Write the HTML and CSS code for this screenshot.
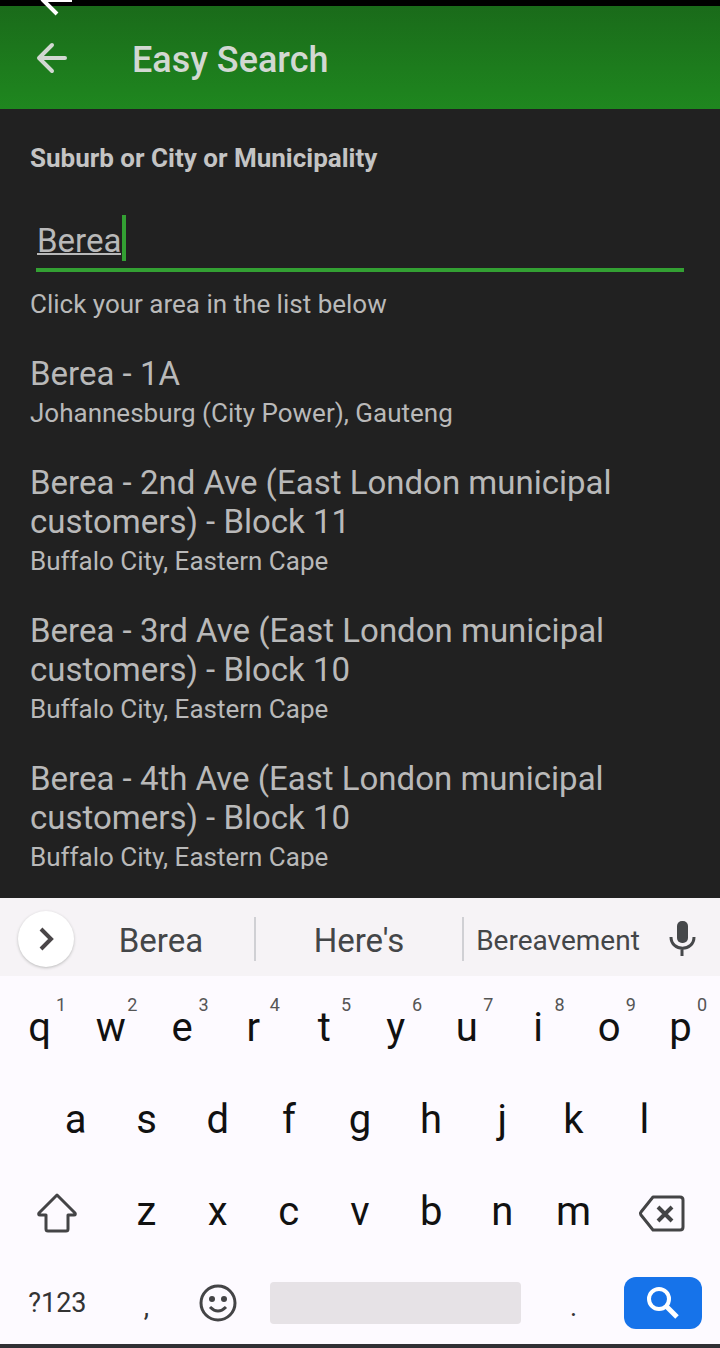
FILE: index.html
```html
<!DOCTYPE html>
<html lang="en">
<head>
    <meta charset="UTF-8">
    <meta name="viewport" content="width=device-width, initial-scale=1.0">
    <title>Easy Search</title>
    <link rel="stylesheet" href="styles.css">
</head>
<body>
    <div class="statusBar">
        <button class="outerBack" aria-label="Close">
            <svg width="34" height="16" viewBox="0 0 34 16"><path d="M34 0H5M4 -1L19 14" fill="none" stroke="#fff" stroke-width="4"/></svg>
        </button>
    </div>

    <header class="appBar">
        <button class="back" aria-label="Back">
            <svg width="32" height="32" viewBox="0 0 32 32"><path d="M29 16H4M16 3L3 16L16 29" fill="none" stroke="#d2d8d2" stroke-width="4" stroke-linejoin="round" stroke-linecap="round"/></svg>
        </button>
        <h1>Easy Search</h1>
    </header>

    <main>
        <label class="fieldLabel" for="areaInput">Suburb or City or Municipality</label>
        <div class="field">
            <input type="text" id="areaInput" value="Berea" size="4" autocomplete="off">
        </div>
        <p class="hint">Click your area in the list below</p>

        <ul class="areaList">
            <li><a href="#">
                <span class="area">Berea - 1A</span>
                <span class="region">Johannesburg (City Power), Gauteng</span>
            </a></li>
            <li><a href="#">
                <span class="area">Berea - 2nd Ave (East London municipal customers) - Block 11</span>
                <span class="region">Buffalo City, Eastern Cape</span>
            </a></li>
            <li><a href="#">
                <span class="area">Berea - 3rd Ave (East London municipal customers) - Block 10</span>
                <span class="region">Buffalo City, Eastern Cape</span>
            </a></li>
            <li><a href="#">
                <span class="area">Berea - 4th Ave (East London municipal customers) - Block 10</span>
                <span class="region">Buffalo City, Eastern Cape</span>
            </a></li>
        </ul>
    </main>

    <section class="keyboard" aria-label="Keyboard">
        <div class="suggestions">
            <button class="expand" aria-label="More tools">
                <svg width="56" height="56" viewBox="0 0 56 56"><path d="M23 18L33 28L23 38" fill="none" stroke="#4a4648" stroke-width="4"/></svg>
            </button>
            <button class="word">Berea</button>
            <button class="word center">Here's</button>
            <button class="word long">Bereavement</button>
            <button class="mic" aria-label="Voice input">
                <svg width="28" height="36" viewBox="0 0 28 36"><rect x="9" y="0" width="11" height="22" rx="5" fill="#46484a"/><path d="M3 16C3 31 26 31 26 16M14 27V35" fill="none" stroke="#46484a" stroke-width="3"/></svg>
            </button>
        </div>

        <div class="keys">
            <div class="row">
                <button class="key">q<sup>1</sup></button>
                <button class="key">w<sup>2</sup></button>
                <button class="key">e<sup>3</sup></button>
                <button class="key">r<sup>4</sup></button>
                <button class="key">t<sup>5</sup></button>
                <button class="key">y<sup>6</sup></button>
                <button class="key">u<sup>7</sup></button>
                <button class="key">i<sup>8</sup></button>
                <button class="key">o<sup>9</sup></button>
                <button class="key">p<sup>0</sup></button>
            </div>
            <div class="row middle">
                <button class="key">a</button>
                <button class="key">s</button>
                <button class="key">d</button>
                <button class="key">f</button>
                <button class="key">g</button>
                <button class="key">h</button>
                <button class="key">j</button>
                <button class="key">k</button>
                <button class="key">l</button>
            </div>
            <div class="row">
                <button class="key wide" aria-label="Shift">
                    <svg width="42" height="42" viewBox="0 0 42 42"><path d="M21 3L39 21Q40 23 38 23H32V37Q32 39 30 39H12Q10 39 10 37V23H4Q2 23 3 21Z" fill="none" stroke="#444446" stroke-width="3" stroke-linejoin="round"/></svg>
                </button>
                <button class="key">z</button>
                <button class="key">x</button>
                <button class="key">c</button>
                <button class="key">v</button>
                <button class="key">b</button>
                <button class="key">n</button>
                <button class="key">m</button>
                <button class="key wide" aria-label="Delete">
                    <svg width="48" height="40" viewBox="0 0 48 40"><path d="M14 4H41Q44 4 44 7V34Q44 37 41 37H14L2 22Q1 20 2 19Z" fill="none" stroke="#444446" stroke-width="3" stroke-linejoin="round"/><path d="M19 14L33 28M33 14L19 28" stroke="#444446" stroke-width="4"/></svg>
                </button>
            </div>
            <div class="row bottom">
                <button class="key small">?123</button>
                <button class="key small punct">,</button>
                <button class="key" aria-label="Emoji">
                    <svg width="38" height="38" viewBox="0 0 38 38"><circle cx="19" cy="19" r="17" fill="none" stroke="#444446" stroke-width="3"/><circle cx="13" cy="15" r="3" fill="#444446"/><circle cx="25" cy="15" r="3" fill="#444446"/><path d="M11 23Q19 31 27 23" fill="none" stroke="#444446" stroke-width="3"/></svg>
                </button>
                <button class="space" aria-label="Space"></button>
                <button class="key small punct">.</button>
                <button class="key" aria-label="Search">
                    <span class="go"><svg width="34" height="34" viewBox="0 0 34 34"><circle cx="13" cy="13" r="10" fill="none" stroke="#fff" stroke-width="4"/><path d="M20 20L31 31" stroke="#fff" stroke-width="5"/></svg></span>
                </button>
            </div>
        </div>
    </section>
</body>
</html>
```

FILE: styles.css
```css
* {
    box-sizing: border-box;
}

body {
    margin: 0;
    min-height: 100vh;
    display: flex;
    flex-direction: column;
    background-color: #212121;
    color: #b9b9b9;
    font-family: Roboto, "Liberation Sans", sans-serif;
}

button {
    background: none;
    border: none;
    padding: 0;
    font-family: inherit;
    cursor: pointer;
}

svg {
    display: block;
}

.statusBar {
    position: relative;
    height: 6px;
    background-color: #000;
}

.outerBack {
    position: absolute;
    top: 0;
    left: 38px;
}

.appBar {
    display: flex;
    align-items: center;
    gap: 64px;
    height: 103px;
    padding: 0 36px;
    background: linear-gradient(#1a6b1a, #1f871f);
}

.appBar h1 {
    margin: 0;
    padding-top: 4px;
    font-size: 36px;
    font-weight: 500;
    line-height: 44px;
    color: #d2d8d2;
}

main {
    flex: 1;
    padding: 29px 30px;
}

.fieldLabel {
    display: block;
    font-size: 26px;
    font-weight: bold;
    line-height: 40px;
    color: #c4c4c4;
}

.field {
    display: flex;
    margin: 37px 6px 0;
    padding-bottom: 7px;
    border-bottom: 4px solid #33a033;
}

.field input {
    field-sizing: content;
    height: 46px;
    padding: 4px 1px 0;
    border: none;
    border-right: 4px solid #33a033; /* text cursor */
    outline: none;
    background: none;
    color: #b9b9b9;
    font-family: inherit;
    font-size: 33px;
    text-decoration: underline 2px;
}

.hint {
    margin: 12px 0 30px;
    font-size: 26px;
    line-height: 40px;
}

.areaList {
    display: flex;
    flex-direction: column;
    gap: 30px;
    margin: 0;
    padding: 0;
    list-style-type: none;
    overflow: hidden;
}

.areaList li:last-child {
    margin-bottom: -8px;
}

.areaList a {
    color: inherit;
    text-decoration: none;
}

.area {
    display: block;
    font-size: 33px;
    line-height: 39px;
}

.region {
    display: block;
    font-size: 26px;
    line-height: 40px;
}

.keyboard {
    background-color: #fdfaff;
    border-bottom: 4px solid #303034;
}

.suggestions {
    display: flex;
    align-items: center;
    height: 78px;
    padding: 4px 24px 0 18px;
    background-color: #f6f3f6;
}

.expand {
    margin-right: -6px;
    border-radius: 50%;
    background-color: #fff;
    box-shadow: 0 1px 3px #bbb;
}

.word {
    width: 188px;
    height: 44px;
    padding-top: 2px;
    border-right: 2px solid #d0d0d4;
    font-size: 33px;
    color: #444648;
}

.word.center {
    flex: 1;
}

.word.long {
    border: none;
    font-size: 28px;
}

.mic {
    margin-left: 16px;
}

.keys {
    padding: 0 4px;
}

.row {
    display: flex;
    align-items: center;
    height: 92px;
    padding-top: 10px;
}

.row.middle {
    padding-left: 36px;
    padding-right: 36px;
}

.row.bottom {
    display: grid;
    grid-template-columns: 3fr 2fr 2fr 8fr 2fr 3fr;
}

.key {
    position: relative;
    display: flex;
    flex: 2;
    align-items: center;
    justify-content: center;
    height: 80px;
    font-size: 40px;
    color: #111;
}

.key.wide {
    flex: 3;
    padding-top: 4px;
}

.key.small {
    font-size: 27px;
    color: #333;
}

.key.punct {
    padding-top: 8px;
}

.key sup {
    position: absolute;
    top: 8px;
    right: 9px;
    font-size: 18px;
    line-height: 20px;
    color: #555;
}

.space {
    height: 42px;
    margin: 0 17px;
    border-radius: 4px;
    background-color: #e6e2e6;
}

.go {
    display: flex;
    align-items: center;
    justify-content: center;
    width: 78px;
    height: 52px;
    border-radius: 12px;
    background-color: #1673ea;
}
```
